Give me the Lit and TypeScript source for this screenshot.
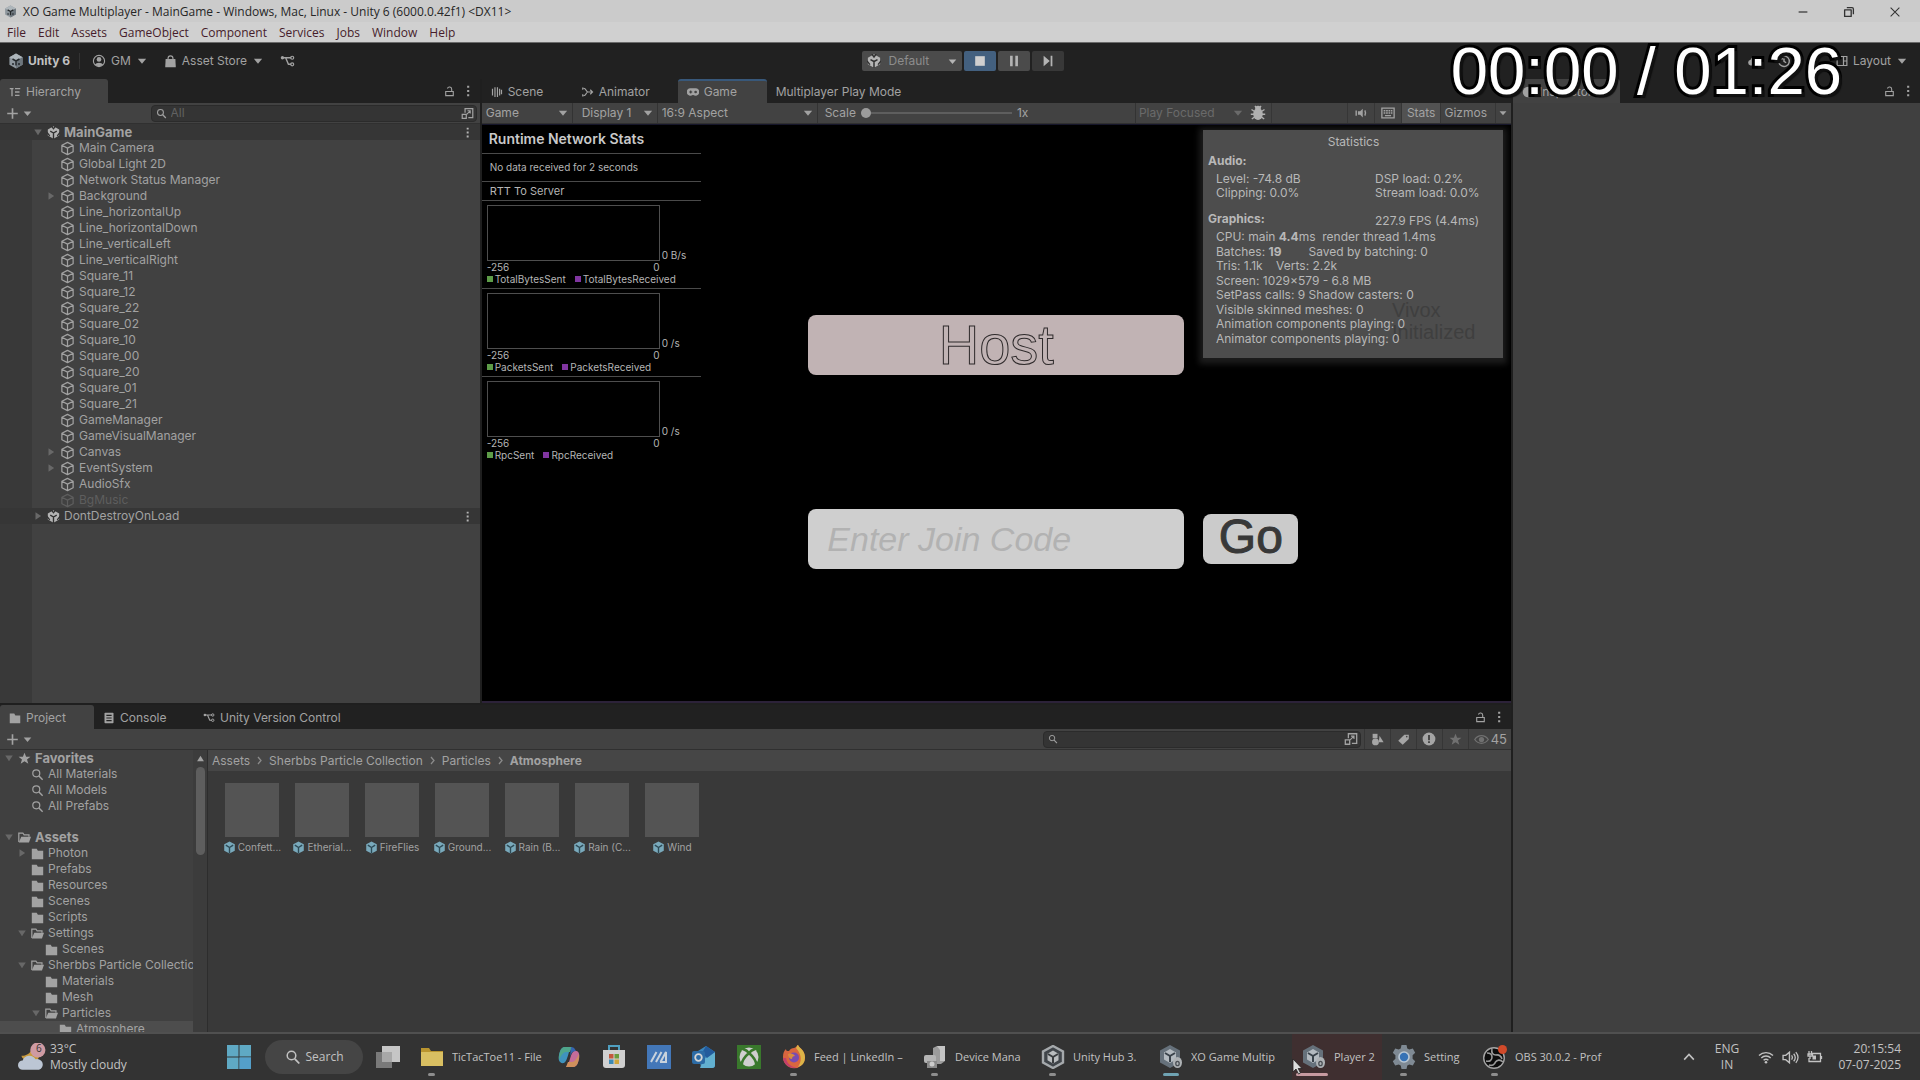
import { LitElement, html, css, svg, nothing } from "lit";
import { customElement, state } from "lit/decorators.js";
import { classMap } from "lit/directives/class-map.js";
import { styleMap } from "lit/directives/style-map.js";

interface TreeNode {
  label: string;
  depth: number;
  icon: string;
  fold?: "open" | "closed";
  bold?: boolean;
  selected?: boolean;
}

interface Task {
  icon: string;
  name: string;
  label?: string;
  width: number;
  mark?: "idle" | "active" | "alert";
}

const shapes: Record<string, unknown> = {
  cube: svg`<path d="M8 1.5 14 4.6v6.8L8 14.5 2 11.4V4.6zM2 4.6l6 3 6-3M8 7.6v6.9" fill="none" stroke="currentColor" stroke-width="1.3" stroke-linejoin="round"/>`,
  scene: svg`<path d="M8 .4 15 4.2v7.600L8 15.600 1 11.800V4.200z" fill="currentColor"/><path d="M8 8.600V16M8 8.600 4 6.400M8 8.600l4-2.200" stroke="#303030" stroke-width="1.700"/><path d="M5.500 0 8 3.400 10.500 0M0 8l3.400 4.200M16 8l-3.400 4.200" stroke="#303030" stroke-width="1.600" fill="none"/>`,
  unity: svg`<path d="M8 .6 14.6 4.3v7.4L8 15.4 1.4 11.7V4.3z" fill="#8d969d"/><path d="M8 .6 14.6 4.3 8 8 1.4 4.3z" fill="#aeb6bb"/><path d="M8 8v7.4l6.600-3.700V4.300z" fill="#6d767d"/><path d="M8 8v4.500M8 8 4.500 6M8 8l3.500-2M5 10v2M11 10v2" stroke="#25292c" stroke-width="1.500"/>`,
  account: svg`<circle cx="8" cy="8" r="6.400" fill="none" stroke="currentColor" stroke-width="1.300"/><circle cx="8" cy="6.200" r="2.700" fill="currentColor"/><path d="M3.300 12a5.400 4 0 0 1 9.400 0A6.400 6.400 0 0 1 3.300 12z" fill="currentColor"/>`,
  bag: svg`<path d="M2 5h12l.5 10h-13z" fill="currentColor"/><path d="M5 6V4a3 3 0 0 1 6 0v2" fill="none" stroke="currentColor" stroke-width="1.400"/>`,
  branch: svg`<path d="M2 4h4M6 4h6M6 4l3 7h3" fill="none" stroke="currentColor" stroke-width="1.500"/><circle cx="2.600" cy="4" r="1.800" fill="currentColor"/><circle cx="13" cy="4" r="1.600" fill="none" stroke="currentColor" stroke-width="1.300"/><circle cx="13" cy="11" r="1.600" fill="none" stroke="currentColor" stroke-width="1.300"/>`,
  caret: svg`<path d="M2.500 5h11L8 11.500z" fill="currentColor"/>`,
  open: svg`<path d="M2 4h12L8 13z" fill="currentColor"/>`,
  closed: svg`<path d="M4 2v12L13 8z" fill="currentColor"/>`,
  list: svg`<path d="M1 3.500h5M8 3.500h7M4 3.500v10M8 8h6M8 12.500h6" stroke="currentColor" stroke-width="1.800" fill="none"/>`,
  lock: svg`<path d="M2.500 8h11v6h-11z" fill="none" stroke="currentColor" stroke-width="1.600"/><path d="M5 3.600A3.200 3.200 0 0 1 11.200 4.600V8" fill="none" stroke="currentColor" stroke-width="1.600"/>`,
  kebab: svg`<path d="M7 2h2.400v2.400H7zM7 6.800h2.400v2.400H7zM7 11.600h2.400V14H7z" fill="currentColor"/>`,
  plus: svg`<path d="M8 1.500v13M1.500 8h13" stroke="currentColor" stroke-width="2"/>`,
  search: svg`<circle cx="6.500" cy="6.500" r="4.300" fill="none" stroke="currentColor" stroke-width="1.500"/><path d="m9.800 9.800 4.500 4.700" stroke="currentColor" stroke-width="1.800"/>`,
  expand: svg`<path d="M5 7V2h9.500v11H9" fill="none" stroke="currentColor" stroke-width="1.500"/><path d="M1.500 9h5v5h-5z" fill="none" stroke="currentColor" stroke-width="1.500"/><path d="m7 9 4-4M8 4.700h3.400V8" fill="none" stroke="currentColor" stroke-width="1.300"/>`,
  grid: svg`<path d="M2 3.500v9M5.300 1.500v13M8.600 1.500v13M11.500 3.500v9M14 5v6" stroke="currentColor" stroke-width="1.600"/>`,
  animator: svg`<path d="M2 3c4 0 3 5 6 5h6M2 13c4 0 3-5 6-5M11 5l3 3-3 3M1 2v3M1 11v3" fill="none" stroke="currentColor" stroke-width="1.600"/>`,
  gamepad: svg`<path d="M5 3h6a5 5 0 1 1-2.600 9h-.8A5 5 0 1 1 5 3z" fill="currentColor"/><path d="M3 8h4M5 6v4" stroke="#333" stroke-width="1.300"/><circle cx="11.500" cy="8" r="1.800" fill="#444"/>`,
  bug: svg`<ellipse cx="8" cy="9" rx="4.800" ry="6" fill="currentColor"/><circle cx="8" cy="3.500" r="2.800" fill="currentColor"/><path d="m1.500 4.500 4 2.500M14.500 4.500l-4 2.500M.8 9.200H5M15.200 9.200H11M1.800 14l3.600-2.600M14.200 14l-3.600-2.600M5 1l1.500 2M11 1 9.500 3" stroke="currentColor" stroke-width="1.400"/>`,
  audio: svg`<path d="M4.500 6H7l3-3v10L7 10H4.500z" fill="currentColor"/><path d="M2.500 5v6M12.400 5c1 2 1 4 0 6" stroke="currentColor" stroke-width="1.600" fill="none"/>`,
  keyboard: svg`<path d="M1 2.500h14v11H1z" fill="none" stroke="currentColor" stroke-width="1.500"/><path d="M3 5.500h10M3 8h10" stroke="currentColor" stroke-width="1.600" stroke-dasharray="2 .8"/><path d="M4.500 11h7" stroke="currentColor" stroke-width="1.500"/>`,
  folder: svg`<path d="M1 2h6l1.500 2.500H15V15H1z" fill="currentColor"/>`,
  folderOpen: svg`<path d="M1 13.500v-11h5l1.500 2.200h6V7" fill="none" stroke="currentColor" stroke-width="1.500"/><path d="M4 7h12l-2.500 7H1z" fill="currentColor"/>`,
  console: svg`<path d="M3 1h10a1 1 0 0 1 1 1v12a1 1 0 0 1-1 1H3a1 1 0 0 1-1-1V2a1 1 0 0 1 1-1z" fill="currentColor"/><path d="M4.500 4.500h7M4.500 8h7M4.500 11.500h7" stroke="#222" stroke-width="1.500"/>`,
  star: svg`<path d="m8 .8 2 5h5.300l-4.200 3.300 1.600 5.400L8 11.300l-4.700 3.200 1.600-5.400L.7 5.800H6z" fill="currentColor"/>`,
  types: svg`<path d="M2 1h6v5.500H2z" fill="currentColor"/><path d="m10.500 3.500 5 8h-6z" fill="currentColor"/><circle cx="5.500" cy="11" r="4.200" fill="currentColor"/>`,
  tag: svg`<path d="M14.500 2v5.500L7 14.500 1.500 9.500 9 2z" fill="currentColor"/><circle cx="12" cy="4.500" r="1" fill="#444"/>`,
  alert: svg`<circle cx="8" cy="8" r="7.300" fill="currentColor"/><path d="M8 3.500v5.800M8 10.500v2" stroke="#3b3b3b" stroke-width="2"/>`,
  eye: svg`<path d="M.8 8c3.600-5.400 10.800-5.400 14.400 0-3.600 5.400-10.800 5.400-14.400 0z" fill="none" stroke="currentColor" stroke-width="1.400"/><circle cx="8" cy="8" r="2.800" fill="currentColor"/>`,
  stop: svg`<path d="M2.500 2.500h11v11h-11z" fill="currentColor"/>`,
  pause: svg`<path d="M3.500 2h3v12h-3zM9.500 2h3v12h-3z" fill="currentColor"/>`,
  step: svg`<path d="M3 2v12l7-6zM11 2h2v12h-2z" fill="currentColor"/>`,
  prefab: svg`<path d="M8 .5 14.500 4v8L8 15.500 1.500 12V4z" fill="#79a9bb"/><path d="M8 8v7M8 8 3.500 5M8 8l4.500-3" stroke="#2d4a56" stroke-width="1.700"/>`,
  cloud: svg`<path d="M4 13h8.500a3 3 0 0 0 0-6A4.500 4.500 0 0 0 4 6.500 3.300 3.300 0 0 0 4 13z" fill="currentColor"/>`,
  history: svg`<path d="M3 5a6 6 0 1 1-.8 4.500M3 1.500V5.500h4M8 5v3.500l2.500 1.500" fill="none" stroke="currentColor" stroke-width="1.600"/>`,
  layout: svg`<path d="M1.500 2h13v12h-13zM10 2v12M10 8h4.500" fill="none" stroke="currentColor" stroke-width="1.600"/>`,
  info: svg`<circle cx="8" cy="8" r="7" fill="currentColor"/>`,
  minimize: svg`<path d="M3 8h10" stroke="currentColor" stroke-width="1.400"/>`,
  restore: svg`<path d="M3 5.500h7.500V13H3z" fill="none" stroke="currentColor" stroke-width="1.500" stroke-linejoin="round"/><path d="M5.500 3h6A1.500 1.500 0 0 1 13 4.500v6" fill="none" stroke="currentColor" stroke-width="1.500"/>`,
  close: svg`<path d="m3 3 10 10M13 3 3 13" stroke="currentColor" stroke-width="1.200"/>`,
  up: svg`<path d="m2.500 11 5.500-6 5.500 6" fill="none" stroke="currentColor" stroke-width="1.800"/>`,
  upFill: svg`<path d="M8 4l5 8H3z" fill="currentColor"/>`,
  wifi: svg`<path d="M1 6.500a10 10 0 0 1 14 0M3.300 9a6.700 6.700 0 0 1 9.400 0M5.600 11.300a3.500 3.500 0 0 1 4.800 0" fill="none" stroke="currentColor" stroke-width="1.400"/><circle cx="8" cy="13.300" r="1.300" fill="currentColor"/>`,
  volume: svg`<path d="M1 6h2.500L7 3v10L3.500 10H1z" fill="none" stroke="currentColor" stroke-width="1.300"/><path d="M9 6c.9 1.200.9 2.800 0 4M11 4.500c1.700 2 1.700 5 0 7M13 3c2.500 3 2.500 7 0 10" fill="none" stroke="currentColor" stroke-width="1.200"/>`,
  battery: svg`<path d="M5 4.500h8.500v8H2V9" fill="none" stroke="currentColor" stroke-width="1.300"/><path d="M14.500 7v3M2 2v4M4.500 2v4M1 5h4.500v2H1zM3 7v3" stroke="currentColor" stroke-width="1.300" fill="none"/><path d="M5.500 6.500h3.500v4H5.500z" fill="currentColor"/>`,
};

/* Taskbar artwork on a 24-unit grid */
const art: Record<string, unknown> = {
  start: svg`<path d="M0 0h11.500v11.500H0zM12.500 0H24v11.500H12.500zM0 12.500h11.500V24H0zM12.500 12.500H24V24H12.500z" fill="#5fa9c4"/><path d="M12.500 12.500H24V24H12.500z" fill="#549fca"/>`,
  taskview: svg`<path d="M0 7h16v16H0z" fill="#7a7a7a"/><path d="M6 1h18v16H6z" fill="#c6c6c6"/><path d="M6 7h10v10H6z" fill="#a8a8a8"/>`,
  explorer: svg`<path d="M1 3h8l2 3h12v4H1z" fill="#b9942f"/><path d="M1 7h22v14H1z" fill="#d9bf62"/>`,
  copilot: svg`<path d="M8 2h7c-4 3-4 14-8 16-5 1-6-4-5-8s2-8 6-8z" fill="#3f93bd"/><path d="M8 2h7l-2 5H9c-3 0-5 4-7 8 0-6 1-13 6-13z" fill="#4fa58a"/><path d="M16 22H9c4-3 4-14 8-16 5-1 6 4 5 8s-2 8-6 8z" fill="#c56c9a"/><path d="M16 22H9l2-5h4c3 0 5-4 7-8 0 6-1 13-6 13z" fill="#d0905c"/><path d="M14 2c4 0 4 3 5 4-4 0-5 3-6 6z" fill="#3565b0"/>`,
  store: svg`<path d="M7 6V1h10v5" fill="none" stroke="#4f9fc0" stroke-width="2"/><path d="M1 5h22v15a3 3 0 0 1-3 3H4a3 3 0 0 1-3-3z" fill="#d0d0d0"/><path d="M7 9h4.500v4.500H7z" fill="#c4583c"/><path d="M12.500 9H17v4.500h-4.500z" fill="#6a9c3c"/><path d="M7 14.500h4.500V19H7z" fill="#3c8ab5"/><path d="M12.500 14.500H17V19h-4.500z" fill="#d0a63a"/>`,
  asus: svg`<path d="M0 0h24v24H0z" fill="#4377b8"/><path d="M4 17 9.500 7M9 17l5.500-10M13 17h6V7l-5.500 10" stroke="#c8d2dc" stroke-width="2" fill="none"/>`,
  outlook: svg`<path d="M6 6 14 1l9 6v13a3 3 0 0 1-3 3H9z" fill="#3a86bd"/><path d="m12 14 11-7v13a3 3 0 0 1-3 3H8z" fill="#62b0d0"/><path d="m14 1 9 6-8 6-5-5z" fill="#235b9c"/><rect x="0" y="6" width="13" height="13" rx="2" fill="#2c6ba5"/><circle cx="6.500" cy="12.500" r="3.300" fill="none" stroke="#d5d5d5" stroke-width="1.800"/>`,
  xbox: svg`<path d="M0 0h24v24H0z" fill="#39782c"/><circle cx="12" cy="12" r="9.500" fill="#cfcfcf"/><path d="M6 4c3 1 4.500 2 6 4 1.500-2 3-3 6-4M4.500 20C5 15 8.500 11 12 8c3.500 3 7 7 7.500 12" fill="none" stroke="#39782c" stroke-width="2.600"/>`,
  firefox: svg`<path d="M12 3c2 0 3-3 4-3 1 3 7 5 7 12.500A11 11 0 1 1 1 12c0-4 1-6 3-8 0 2 1 2 3 2 1-2 3-3 5-3z" fill="#d9663f"/><path d="M14 3c1-1 1-3 2-3 1 3 7 5 7 12.500A10 10 0 0 1 16 22c4-6 4-12-2-19z" fill="#dcb347"/><path d="M1 13a11 11 0 0 0 14 9.500C9 22 5 19 4 13z" fill="#c23f6b"/><circle cx="12" cy="12.500" r="5" fill="#7a4bb0"/><path d="M6 9c3-1 6 0 7 2-2 0-3 1-3 3-2 0-4-2-4-5z" fill="#d98b3f"/>`,
  device: svg`<path d="M10 3 14 1h8v15l-4 3h-8z" fill="#9c9c9c"/><path d="M14 1h8v15h-5V5z" fill="#c4c4c4"/><rect x="1" y="10" width="12" height="8" rx="2" fill="#b5b5b5"/><path d="M4 16h10v7H4z" fill="#8a8a8a"/><circle cx="9" cy="19" r="2.500" fill="#ccc"/>`,
  hub: svg`<path d="m12 1 10 5.500v11L12 23 2 17.500v-11z" fill="#40454a" stroke="#a5a9ac" stroke-width="2.400"/><path d="m12 5.500 5.500 3.200v6.600L12 18.500l-5.500-3.200V8.700z" fill="#b9bcbe"/><path d="M12 12v6M12 12 7 9M12 12l5-3" stroke="#3a3d40" stroke-width="2"/>`,
  editor: svg`<path d="M11 0 21 5.500v12L11 23 1 17.500v-12z" fill="#66717b"/><path d="m11 4 6 3.400v7L11 18l-6-3.600v-7z" fill="#b3bac0"/><path d="M11 11v6M11 11 6 8M11 11l5-3" stroke="#39424a" stroke-width="2"/><ellipse cx="18.500" cy="17.500" rx="4.500" ry="5.500" fill="#aeb2b5"/><ellipse cx="18.500" cy="18.500" rx="1.700" ry="2.200" fill="none" stroke="#4a4f54" stroke-width="1.300"/>`,
  settings: svg`<path d="M9.500 0h5l.8 3.500 2 1 3.500-1 2.400 4.200-2.600 2.500v3.600l2.600 2.500-2.400 4.200-3.500-1-2 1-.8 3.500h-5l-.8-3.500-2-1-3.500 1L.8 16.300l2.600-2.500v-3.600L.8 7.700l2.400-4.200 3.500 1 2-1z" fill="#7f8a94"/><circle cx="12" cy="12" r="5.800" fill="#b9c7d4"/><circle cx="12" cy="12" r="4.200" fill="#3672b5"/>`,
  obs: svg`<circle cx="11" cy="13" r="10.300" fill="#0c0c0c" stroke="#a5a5a5" stroke-width="1.400"/><path d="M9 4c-1 4 1 6 4 6 3-.5 5 1 6 4M20 17c-3-3-6-2-7.500 0-1 3-3.500 4-6.500 3M3 16c4 1 6-1 6-4 0-3-2-4-5-4" fill="none" stroke="#9a9a9a" stroke-width="1.600"/><circle cx="19.500" cy="4.500" r="4.500" fill="#d14a2a"/>`,
  weather: svg`<path d="M12 4c-1 5 2 8 6 8-1 3-4 5-8 4S3 13 3 11c4 0 8-2 9-7z" fill="#c99a3c"/><path d="M4 23a4 4 0 0 1 0-8 6 6 0 0 1 11-1 4.500 4.500 0 0 1 3 9z" fill="#bcc6d4"/><circle cx="17" cy="6" r="6.500" fill="#cf9ba3"/>`,
};

const scenes: TreeNode[] = [
  { label: "MainGame", depth: 0, icon: "scene", fold: "open", bold: true },
  ...[
    "Main Camera", "Global Light 2D", "Network Status Manager", "Background", "Line_horizontalUp",
    "Line_horizontalDown", "Line_verticalLeft", "Line_verticalRight", "Square_11", "Square_12",
    "Square_22", "Square_02", "Square_10", "Square_00", "Square_20", "Square_01", "Square_21",
    "GameManager", "GameVisualManager", "Canvas", "EventSystem", "AudioSfx", "BgMusic",
  ].map((label): TreeNode => ({
    label,
    depth: 1,
    icon: "cube",
    fold: ["Background", "Canvas", "EventSystem"].includes(label) ? "closed" : undefined,
  })),
  { label: "DontDestroyOnLoad", depth: 0, icon: "scene", fold: "closed" },
];

const favorites: TreeNode[] = [
  { label: "Favorites", depth: 0, icon: "star", fold: "open", bold: true },
  { label: "All Materials", depth: 1, icon: "search" },
  { label: "All Models", depth: 1, icon: "search" },
  { label: "All Prefabs", depth: 1, icon: "search" },
];

const folders: TreeNode[] = [
  { label: "Assets", depth: 0, icon: "folderOpen", fold: "open", bold: true },
  { label: "Photon", depth: 1, icon: "folder", fold: "closed" },
  { label: "Prefabs", depth: 1, icon: "folder" },
  { label: "Resources", depth: 1, icon: "folder" },
  { label: "Scenes", depth: 1, icon: "folder" },
  { label: "Scripts", depth: 1, icon: "folder" },
  { label: "Settings", depth: 1, icon: "folderOpen", fold: "open" },
  { label: "Scenes", depth: 2, icon: "folder" },
  { label: "Sherbbs Particle Collection", depth: 1, icon: "folderOpen", fold: "open" },
  { label: "Materials", depth: 2, icon: "folder" },
  { label: "Mesh", depth: 2, icon: "folder" },
  { label: "Particles", depth: 2, icon: "folderOpen", fold: "open" },
  { label: "Atmosphere", depth: 3, icon: "folder", selected: true },
];

const tasks: Task[] = [
  { icon: "taskview", name: "Task view", width: 44 },
  { icon: "explorer", name: "File Explorer", label: "TicTacToe11 - File", width: 137, mark: "idle" },
  { icon: "copilot", name: "Copilot", width: 45 },
  { icon: "store", name: "Store", width: 45 },
  { icon: "asus", name: "MyASUS", width: 45 },
  { icon: "outlook", name: "Outlook", width: 45 },
  { icon: "xbox", name: "Xbox", width: 45 },
  { icon: "firefox", name: "Firefox", label: "Feed | LinkedIn –", width: 141, mark: "idle" },
  { icon: "device", name: "Device Manager", label: "Device Mana", width: 118, mark: "idle" },
  { icon: "hub", name: "Unity Hub", label: "Unity Hub 3.", width: 118, mark: "idle" },
  { icon: "editor", name: "Unity Editor", label: "XO Game Multip", width: 143, mark: "active" },
  { icon: "editor", name: "Player", label: "Player 2", width: 90, mark: "alert" },
  { icon: "settings", name: "Settings", label: "Setting", width: 91, mark: "idle" },
  { icon: "obs", name: "OBS", label: "OBS 30.0.2 - Prof", width: 144, mark: "idle" },
];

const graphs = [
  { unit: "0 B/s", sent: "TotalBytesSent", received: "TotalBytesReceived" },
  { unit: "0 /s", sent: "PacketsSent", received: "PacketsReceived" },
  { unit: "0 /s", sent: "RpcSent", received: "RpcReceived" },
];

const icon = (name: string, size = 14, cls = "") =>
  html`<svg class="icon ${cls}" width=${size} height=${size} viewBox="0 0 16 16" aria-hidden="true">${shapes[name]}</svg>`;

const picture = (name: string, size = 24) =>
  html`<svg class="icon" width=${size} height=${size} viewBox="0 0 24 24" aria-hidden="true">${art[name]}</svg>`;

@customElement("app-root")
export class AppRoot extends LitElement {
  @state() private joinCode = "";

  static styles = css`
    :host {
      display: flex;
      flex-direction: column;
      height: 100vh;
      overflow: hidden;
      position: relative;
      background: #1f1f1f;
      color: #a2a2a2;
      font: 12px/16px Inter, "Liberation Sans", sans-serif;
    }
    * { box-sizing: border-box; }
    button, input, select { font: inherit; color: inherit; margin: 0; border: 0; padding: 0; background: none; border-radius: 0; outline: 0; }
    button { display: flex; align-items: center; text-align: left; white-space: nowrap; }
    a { color: inherit; text-decoration: none; }
    ul { list-style: none; margin: 0; padding: 0; }
    h2, h3, p { margin: 0; font-size: inherit; }
    .icon { display: block; flex: none; }
    .fill { flex: 1; min-width: 0; }

    .titlebar, .menubar { font-family: "Open Sans", "Noto Sans", sans-serif; display: flex; align-items: center; flex: none; }
    .titlebar { height: 22px; background: #cbcbcb; color: #262626; padding: 1px 16px 0 4px; gap: 6px; }
    .titlebar .icon { color: #333; }
    .window-buttons { display: flex; gap: 32px; padding-right: 2px; }
    .menubar { height: 21px; background: #d0d0d0; color: #461c2b; padding: 1px 0 0 7px; gap: 12px; border-bottom: 1px solid #6a6a6a; }

    .toolbar { flex: none; height: 36px; display: grid; grid-template-columns: 1fr auto 1fr; align-items: center; background: #212121; padding: 0 12px 0 8px; }
    .cluster { display: flex; align-items: center; gap: 6px; }
    .cluster.end { justify-content: flex-end; gap: 16px; padding-right: 0; }
    .cluster button { gap: 5px; }
    .cluster .brand { font-weight: 700; color: #c2c2c2; gap: 4px; padding-right: 9px; border-right: 1px solid #333; margin-right: 6px; }
    .cluster .store { margin: 0 10px; }
    .transport { display: flex; gap: 2px; padding-left: 9px; color: #b4b4b4; }
    .transport > * { height: 20px; background: #4b4b4b; border-radius: 2px; }
    .transport button { width: 32px; justify-content: center; }
    .transport .on { background: #43607f; color: #cfcfcf; }
    .transport .next { background: #383838; }
    .mode { width: 100px; display: flex; align-items: center; padding: 0 4px 0 5px; gap: 8px; color: #8d8d8d; }
    .mode .icon { color: #b4b4b4; }
    select { appearance: none; flex: 1; min-width: 0; height: 100%; text-overflow: clip; }

    .workspace { flex: 1; min-height: 0; display: grid; grid-template-columns: 1511fr 407fr; gap: 2px; }
    .left { display: grid; grid-template-rows: 624fr 327fr; gap: 2px; min-height: 0; min-width: 0; }
    .upper { display: grid; grid-template-columns: 480fr 1030fr; gap: 2px; min-height: 0; }
    .panel { display: flex; flex-direction: column; min-height: 0; min-width: 0; overflow: hidden; background: #404040; }

    .tabs { flex: none; height: 24px; display: flex; background: #212121; padding-right: 5px; }
    .tabs .tab { padding: 1px 9px 0; gap: 5px; }
    .tabs .tab.current { background: #424242; border-radius: 3px 3px 0 0; }
    .tabs .tab.focus { border-top: 2px solid #38587a; padding-top: 0; }
    .tabs .corner { gap: 6px; display: flex; align-items: center; }
    .bar { flex: none; height: 21px; display: flex; align-items: center; background: #424242; border-bottom: 1px solid #303030; }
    .add { gap: 3px; padding: 0 0 0 6px; }
    .field { display: flex; align-items: center; gap: 4px; height: 17px; background: #343434; border: 1px solid #2b2b2b; border-radius: 4px; padding: 0 2px 0 4px; }
    .field input { flex: 1; min-width: 0; color: #a2a2a2; }
    .field input::placeholder { color: #626262; opacity: 1; }
    .hierarchy-search { width: 68%; margin: 0 3px 0 auto; }
    .project-search { width: 318px; margin-left: auto; margin-right: 3px; }

    .row { height: 16px; display: flex; align-items: center; gap: 4px; white-space: nowrap; }
    .row .fold { width: 10px; display: flex; flex: none; color: #686868; }
    .strong { font-weight: 700; }
    .row.strong { font-size: 13px; }
    .scene-tree { flex: 1; background: linear-gradient(90deg, #393939 32px, #414141 32px); overflow: hidden; }
    .scene-tree .row { padding: 0 6px 0 46px; }
    .scene-tree .row.root { background: #363636; padding-left: 33px; }
    .scene-tree .row.root .icon { color: #b4b4b4; }
    .scene-tree .row.root .fold .icon { color: #686868; }
    .scene-tree .row.off { color: #5e5e5e; }
    .scene-tree .label { flex: 1; }

    .pick { display: flex; flex: none; align-items: center; height: 100%; padding: 0 3px 0 4px; border-right: 1px solid #333; }
    .pick.view { width: 91px; }
    .pick.display { width: 85px; padding-left: 9px; }
    .pick.aspect { width: 160px; }
    .pick.focus-mode { width: 112px; border-left: 1px solid #333; border-right: 0; color: #6a6a6a; padding-left: 3px; }
    .scale { display: flex; align-items: center; gap: 5px; padding-left: 7px; }
    .scale input { appearance: none; width: 151px; height: 12px; background: linear-gradient(#5e5e5e, #5e5e5e) center / 100% 2px no-repeat; }
    .scale input::-webkit-slider-thumb { appearance: none; width: 10px; height: 10px; border-radius: 50%; background: #9b9b9b; }
    .tool { height: 100%; justify-content: center; padding: 0 6px; border-left: 1px solid #363636; }
    .tool.stats { background: #525252; padding: 0 5px; }
    .tool.gizmos { padding: 0 8px 0 3px; }
    .tool.more { padding: 0 3px 0 2px; }
    .bug { color: #b0b0b0; padding: 0 5px 0 3px; }
    .gap { width: 76px; border-left: 1px solid #363636; height: 100%; }

    .game { flex: 1; position: relative; background: #000; border-top: 1px solid #16162a; border-bottom: 2px solid #2c2239; overflow: hidden; }
    .menu { display: grid; grid-template-columns: 1fr 376px 1fr; column-gap: 19px; row-gap: 134px; align-items: center; padding-top: 190px; font-family: "Liberation Sans", Arial, sans-serif; }
    .menu > * { border-radius: 8px; }
    .host { grid-column: 2; height: 60px; justify-content: center; background: #c1b3b4; font-size: 56px; line-height: 60px; color: #c1b3b4; -webkit-text-stroke: 1px #2e2a2b; }
    .code { grid-column: 2; width: 100%; height: 60px; background: #cfcfcf; color: #333; font-size: 34px; font-style: italic; padding: 0 19px; }
    .code::placeholder { color: #b2b2b2; opacity: 1; }
    .go { width: 95px; height: 50px; justify-content: center; background: #cbcbcb; color: #383838; font-size: 48px; line-height: 46px; padding-bottom: 4px; -webkit-text-stroke: 1px #383838; }

    .net { position: absolute; top: 0; left: 0; width: 219px; color: #b5b5b5; font-size: 11px; }
    .net > * { border-bottom: 1px solid #4a4a4a; }
    .net h2 { font-size: 14px; line-height: 28px; padding-left: 7px; color: #c9c9c9; font-weight: 600; }
    .net p { line-height: 27px; padding-left: 8px; font-size: 10px; }
    .net h3 { line-height: 18px; padding-left: 8px; font-weight: 400; font-size: 11px; }
    .graph { display: grid; grid-template-columns: 173px 1fr; column-gap: 2px; padding: 4px 0 3px 5px; font-size: 10px; line-height: 12px; }
    .graph:last-child { border: 0; }
    .plot { height: 56px; border: 1px solid #4e4e4e; }
    .unit { align-self: end; }
    .axis { display: flex; justify-content: space-between; }
    .legend { grid-column: 1 / -1; display: flex; gap: 9px; }
    .legend span { display: flex; align-items: center; gap: 2px; }
    .legend span::before { content: ""; width: 6px; height: 6px; background: #5d9c48; }
    .legend .received::before { background: #8035a0; }

    .statistics { position: absolute; top: 5px; right: 8px; width: 300px; height: 228px; background: #4d4d4d; color: #b8b8b8; padding: 4px 4px 0 5px; line-height: 14px; box-shadow: 0 2px 6px 4px #1c1c1c; }
    .statistics h2 { text-align: center; font-weight: 400; font-size: 12px; line-height: 16px; }
    .statistics h3 { font-size: 12px; line-height: 22px; }
    .pair { display: grid; grid-template-columns: 167px 1fr; align-items: center; }
    .pair > :first-child:not(h3) { padding-left: 8px; }
    .pair .fps { padding-top: 4px; }
    .audio { padding-bottom: 8px; }
    .render { display: grid; grid-auto-rows: 1fr; height: 116px; align-items: center; padding-left: 8px; position: relative; }
    .render li { white-space: pre; }
    .vivox { position: absolute; right: 25px; bottom: 15px; width: 86px; font: 20px/22px "Liberation Sans", sans-serif; color: #3f3f3f; }

    .project { display: grid; grid-template-columns: 208px 1fr; flex: 1; min-height: 0; }
    .tree { display: grid; grid-template-columns: 1fr 14px; border-right: 1px solid #2d2d2d; background: #404040; min-height: 0; overflow: hidden; }
    .tree-list { overflow: hidden; }
    .tree .row { gap: 4px; padding-left: 4px; overflow: hidden; }
    .tree ul + ul { margin-top: 15px; }
    .tree .d1 { padding-left: 17px; }
    .tree .d2 { padding-left: 31px; }
    .tree .d3 { padding-left: 45px; }
    .tree .selected { background: #4d4d4d; }
    .scroll { display: flex; flex-direction: column; align-items: center; background: #3c3c3c; padding-top: 3px; gap: 3px; }
    .thumb { width: 9px; height: 88px; border-radius: 5px; background: #5e5e5e; }
    .assets { background: #393939; min-width: 0; }
    .crumbs { height: 21px; display: flex; align-items: center; gap: 7px; padding-left: 4px; background: #464646; }
    .crumbs svg { color: #8a8a8a; }
    .tiles { display: flex; flex-wrap: wrap; padding: 12px 9px; }
    .tile { width: 70px; display: flex; flex-direction: column; align-items: center; gap: 3px; font-size: 10px; line-height: 14px; }
    .tile i { width: 54px; height: 54px; background: #545454; }
    .tile span { display: flex; align-items: center; gap: 2px; white-space: nowrap; }
    .filter { width: 26px; padding: 0; color: #a5a5a5; }
    .hidden-count { padding: 0 4px 0 5px; gap: 2px; font-size: 13px; }
    .dim { color: #707070; }

    .taskbar { flex: none; height: 48px; display: flex; align-items: center; background: #333; border-top: 2px solid #505050; color: #c2c2c2; font-family: "Open Sans", "Noto Sans", sans-serif; padding-right: 19px; }
    .weather { width: 227px; padding-left: 18px; gap: 4px; position: relative; }
    .weather b { position: absolute; left: 36px; top: 0; width: 8px; font-size: 10px; line-height: 14px; font-weight: 400; color: #333; }
    .search { width: 98px; height: 34px; border-radius: 17px; background: #454545; justify-content: center; gap: 5px; margin: 0 3px 0 14px; }
    .task { height: 46px; padding-left: 10px; gap: 8px; position: relative; flex: none; overflow: hidden; }
    .task .name { flex: 1; min-width: 0; overflow: hidden; font-size: 11px; }
    .task.alert { background: #3f2f30; }
    .task::after { content: ""; position: absolute; bottom: 4px; left: 18px; width: 7px; height: 3px; border-radius: 2px; background: #8e8e8e; display: none; }
    .task.idle::after { display: block; }
    .task.active::after { display: block; width: 16px; left: 14px; background: #6fa3b3; }
    .task.alert::after { display: block; width: 32px; left: 4px; background: #c79aa0; }
    .pointer { position: absolute; left: 0; top: 24px; z-index: 1; }
    .tray { display: flex; align-items: center; margin-left: auto; gap: 8px; }
    .lang { width: 46px; text-align: center; }
    .clock { width: 70px; text-align: right; }

    .timer { position: absolute; top: 31px; right: 78px; font: 67px/80px "Liberation Sans", Arial, sans-serif; color: #fff; -webkit-text-stroke: 6px #000; paint-order: stroke fill; text-shadow: 3px 3px 1px #111; white-space: pre; }
  `;

  private corner() {
    return html`<span class="corner">
      <button aria-label="Lock">${icon("lock", 11)}</button>
      <button aria-label="More">${icon("kebab", 14)}</button>
    </span>`;
  }

  private tab(label: string, width: number, name = "", cls = "") {
    return html`<button class="tab ${cls}" role="tab" style=${styleMap({ minWidth: `${width}px` })}>
      ${name ? icon(name, 12) : nothing}${label}
    </button>`;
  }

  private node(n: TreeNode, scene: boolean) {
    const classes = {
      row: true,
      root: scene && n.depth === 0,
      off: n.label === "BgMusic",
      strong: !!n.bold,
      selected: !!n.selected,
      [`d${n.depth}`]: !scene,
    };
    return html`<li class=${classMap(classes)} role="treeitem">
      <span class="fold">${n.fold ? icon(n.fold, 10) : nothing}</span>
      ${icon(n.icon, scene && n.depth === 1 ? 15 : 13)}
      <span class="label">${n.label}</span>
      ${scene && n.depth === 0 ? icon("kebab", 13) : nothing}
    </li>`;
  }

  private task(t: Task) {
    return html`<button class="task ${t.mark ?? ""}" aria-label=${t.name} style=${styleMap({ width: `${t.width}px` })}>
      ${picture(t.icon)}
      ${t.label ? html`<span class="name">${t.label}</span>` : nothing}
      ${t.mark === "alert"
        ? html`<svg class="pointer" width="11" height="17" viewBox="0 0 11 17" aria-hidden="true">
            <path d="M1 1v13l3-3 2.500 5 2-1L6.200 10.500H10z" fill="#ddd" stroke="#222" stroke-width=".8" />
          </svg>`
        : nothing}
    </button>`;
  }

  private hierarchy() {
    return html`<section class="panel" aria-label="Hierarchy">
      <div class="tabs" role="tablist">
        ${this.tab("Hierarchy", 108, "list", "current")}<span class="fill"></span>${this.corner()}
      </div>
      <div class="bar">
        <button class="add" aria-label="Create">${icon("plus", 13)}${icon("caret", 11)}</button>
        <label class="field hierarchy-search">${icon("search", 11)}
          <input type="text" placeholder="All" aria-label="Search hierarchy" />${icon("expand", 13)}
        </label>
      </div>
      <ul class="scene-tree" role="tree">${scenes.map((n) => this.node(n, true))}</ul>
    </section>`;
  }

  private pick(cls: string, name: string, value: string) {
    return html`<label class="pick ${cls}"><select aria-label=${name}><option>${value}</option></select>${icon("caret", 12)}</label>`;
  }

  private gamePanel() {
    return html`<section class="panel" aria-label="Game">
      <div class="tabs" role="tablist">
        ${this.tab("Scene", 91, "grid")}${this.tab("Animator", 105, "animator")}
        ${this.tab("Game", 89, "gamepad", "current focus")}${this.tab("Multiplayer Play Mode", 140)}
      </div>
      <div class="bar">
        ${this.pick("view", "View", "Game")}${this.pick("display", "Display", "Display 1")}
        ${this.pick("aspect", "Aspect", "16:9 Aspect")}
        <label class="scale">Scale<input type="range" min="1" max="5" value="1" />1x</label>
        <span class="fill"></span>
        ${this.pick("focus-mode", "Play mode", "Play Focused")}
        <button class="bug" aria-label="Debug">${icon("bug", 16)}</button>
        <span class="gap"></span>
        <button class="tool" aria-label="Mute audio">${icon("audio", 14)}</button>
        <button class="tool" aria-label="Shortcuts">${icon("keyboard", 14)}</button>
        <button class="tool stats">Stats</button>
        <button class="tool gizmos">Gizmos</button>
        <button class="tool more" aria-label="Gizmo options">${icon("caret", 10)}</button>
      </div>
      <div class="game">
        <form class="menu" @submit=${(e: Event) => e.preventDefault()}>
          <button class="host" type="button">Host</button>
          <input class="code" type="text" placeholder="Enter Join Code" aria-label="Join code" .value=${this.joinCode}
            @input=${(e: InputEvent) => (this.joinCode = (e.target as HTMLInputElement).value)} />
          <button class="go">Go</button>
        </form>
        <div class="net">
          <h2>Runtime Network Stats</h2>
          <p>No data received for 2 seconds</p>
          <h3>RTT To Server</h3>
          ${graphs.map((g) => html`<div class="graph">
            <div class="plot"></div><span class="unit">${g.unit}</span>
            <div class="axis"><span>-256</span><span>0</span></div><span></span>
            <div class="legend"><span>${g.sent}</span><span class="received">${g.received}</span></div>
          </div>`)}
        </div>
        <aside class="statistics">
          <p class="vivox">Vivox<br />Initialized</p>
          <h2>Statistics</h2>
          <h3>Audio:</h3>
          <div class="audio">
            <div class="pair"><span>Level: -74.8 dB</span><span>DSP load: 0.2%</span></div>
            <div class="pair"><span>Clipping: 0.0%</span><span>Stream load: 0.0%</span></div>
          </div>
          <div class="pair"><h3>Graphics:</h3><span class="fps">227.9 FPS (4.4ms)</span></div>
          <ul class="render">
            <li>CPU: main <b>4.4</b>ms  render thread 1.4ms</li>
            <li>Batches: <b>19</b>        Saved by batching: 0</li>
            <li>Tris: 1.1k    Verts: 2.2k</li>
            <li>Screen: 1029x579 - 6.8 MB</li>
            <li>SetPass calls: 9 Shadow casters: 0</li>
            <li>Visible skinned meshes: 0</li>
            <li>Animation components playing: 0</li>
            <li>Animator components playing: 0</li>
          </ul>
        </aside>
      </div>
    </section>`;
  }

  private projectPanel() {
    const chevron = html`<svg class="icon" width="5" height="9" viewBox="0 0 5 9" aria-hidden="true"><path d="m1 1 3 3.500L1 8" fill="none" stroke="currentColor" stroke-width="1.300" /></svg>`;
    return html`<section class="panel" aria-label="Project">
      <div class="tabs" role="tablist">
        ${this.tab("Project", 94, "folder", "current")}${this.tab("Console", 100, "console")}
        ${this.tab("Unity Version Control", 140, "branch")}<span class="fill"></span>${this.corner()}
      </div>
      <div class="bar">
        <button class="add" aria-label="Create">${icon("plus", 13)}${icon("caret", 11)}</button>
        <label class="field project-search">${icon("search", 10)}
          <input type="text" aria-label="Search project" />${icon("expand", 14)}
        </label>
        <button class="tool filter" aria-label="Filter by type">${icon("types", 13)}</button>
        <button class="tool filter" aria-label="Filter by label">${icon("tag", 13)}</button>
        <button class="tool filter" aria-label="Filter by import log">${icon("alert", 14)}</button>
        <button class="tool filter" aria-label="Save search"><span class="dim">${icon("star", 13)}</span></button>
        <button class="tool hidden-count" aria-label="Hidden packages"><span class="dim">${icon("eye", 15)}</span>45</button>
      </div>
      <div class="project">
        <div class="tree">
          <div class="tree-list">
            <ul role="tree">${favorites.map((n) => this.node(n, false))}</ul>
            <ul role="tree">${folders.map((n) => this.node(n, false))}</ul>
          </div>
          <div class="scroll">${icon("upFill", 11)}<span class="thumb"></span></div>
        </div>
        <div class="assets">
          <nav class="crumbs" aria-label="Folder path">
            <a href="#">Assets</a>${chevron}<a href="#">Sherbbs Particle Collection</a>${chevron}<a href="#">Particles</a>${chevron}<a href="#" class="strong">Atmosphere</a>
          </nav>
          <div class="tiles">
            ${["Confett...", "Etherial...", "FireFlies", "Ground...", "Rain (B...", "Rain (C...", "Wind"].map(
              (name) => html`<div class="tile"><i></i><span>${icon("prefab", 13)}${name}</span></div>`,
            )}
          </div>
        </div>
      </div>
    </section>`;
  }

  render() {
    return html`
      <header class="titlebar">
        ${icon("unity", 13)}<span class="fill">XO Game Multiplayer - MainGame - Windows, Mac, Linux - Unity 6 (6000.0.42f1) &lt;DX11&gt;</span>
        <div class="window-buttons">
          <button aria-label="Minimize">${icon("minimize", 14)}</button>
          <button aria-label="Restore">${icon("restore", 14)}</button>
          <button aria-label="Close">${icon("close", 14)}</button>
        </div>
      </header>
      <nav class="menubar" aria-label="Main menu">
        ${["File", "Edit", "Assets", "GameObject", "Component", "Services", "Jobs", "Window", "Help"].map((m) => html`<button>${m}</button>`)}
      </nav>
      <div class="toolbar">
        <div class="cluster">
          <button class="brand">${icon("unity", 16)}Unity 6</button>
          <button>${icon("account", 14)}GM${icon("caret", 12)}</button>
          <button class="store">${icon("bag", 13)}Asset Store${icon("caret", 12)}</button>
          <button aria-label="Version control">${icon("branch", 15)}</button>
        </div>
        <div class="transport">
          <label class="mode">${icon("scene", 14)}<select aria-label="Play scenario"><option>Default</option></select>${icon("caret", 11)}</label>
          <button class="on" aria-label="Stop">${icon("stop", 14)}</button>
          <button aria-label="Pause">${icon("pause", 14)}</button>
          <button class="next" aria-label="Step">${icon("step", 14)}</button>
        </div>
        <div class="cluster end">
          <button aria-label="Cloud">${icon("cloud", 14)}</button>
          <button aria-label="Undo history">${icon("history", 14)}</button>
          <button aria-label="Search">${icon("search", 13)}</button>
          <button>${icon("layout", 12)}Layout${icon("caret", 12)}</button>
        </div>
      </div>
      <main class="workspace">
        <div class="left">
          <div class="upper">${this.hierarchy()}${this.gamePanel()}</div>
          ${this.projectPanel()}
        </div>
        <section class="panel" aria-label="Inspector">
          <div class="tabs" role="tablist">
            ${this.tab("Inspector", 107, "info", "current")}<span class="fill"></span>${this.corner()}
          </div>
        </section>
      </main>
      <footer class="taskbar">
        <button class="weather">${picture("weather", 28)}<b>6</b><span>33°C<br />Mostly cloudy</span></button>
        <button aria-label="Start">${picture("start")}</button>
        <button class="search">${icon("search", 16)}Search</button>
        ${tasks.map((t) => this.task(t))}
        <div class="tray">
          <button aria-label="Hidden icons">${icon("up", 14)}</button>
          <span class="lang">ENG<br />IN</span>
          ${icon("wifi", 16)}${icon("volume", 17)}${icon("battery", 16)}
          <span class="clock">20:15:54<br />07-07-2025</span>
        </div>
      </footer>
      <div class="timer">00:00 / 01:26</div>
    `;
  }
}
